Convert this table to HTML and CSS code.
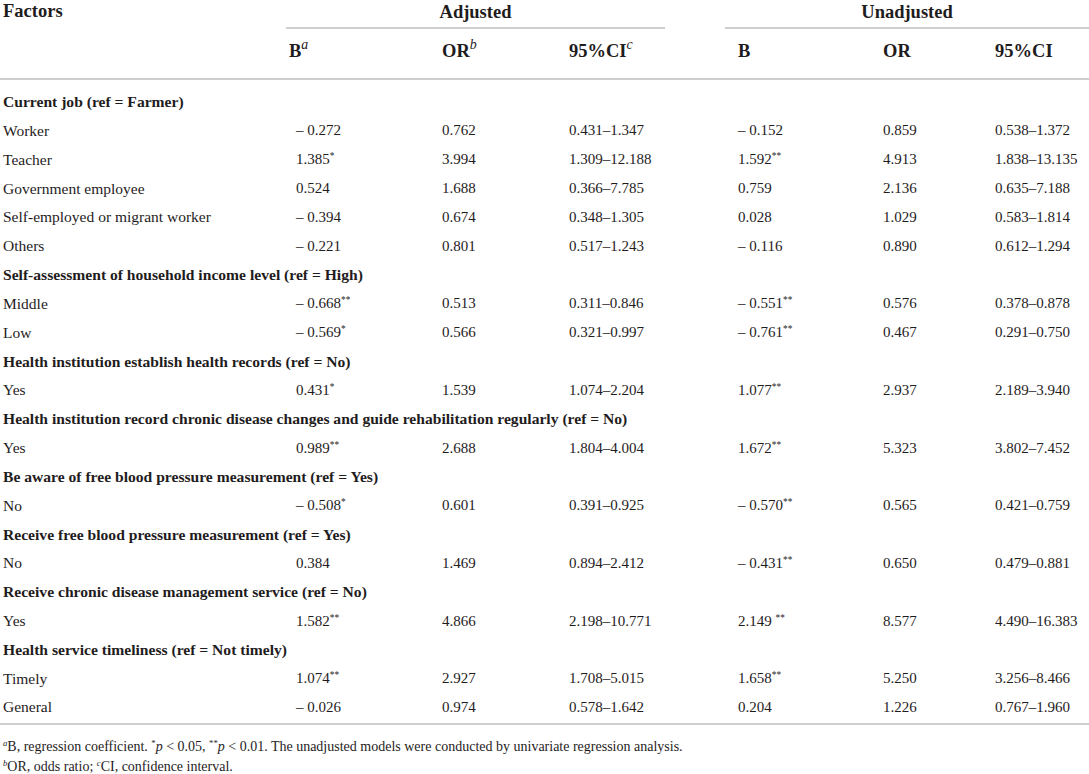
FILE: index.html
```html
<!DOCTYPE html>
<html lang="en">
<head>
    <meta charset="UTF-8">
    <meta name="viewport" content="width=device-width, initial-scale=1.0">
    <title>Factors table</title>
    <link rel="stylesheet" href="styles.css">
</head>
<body>
    <table class="results">
        <colgroup>
            <col class="c-factor">
            <col class="c-b">
            <col class="c-or">
            <col class="c-ci">
            <col class="c-b2">
            <col class="c-or2">
            <col class="c-ci2">
        </colgroup>
        <thead>
            <tr class="group-row">
                <th class="factors" rowspan="2">Factors</th>
                <th colspan="3"><div class="group adjusted">Adjusted</div></th>
                <th colspan="3"><div class="group unadjusted">Unadjusted</div></th>
            </tr>
            <tr class="label-row">
                <th>B<sup><i>a</i></sup></th>
                <th>OR<sup><i>b</i></sup></th>
                <th>95%CI<sup><i>c</i></sup></th>
                <th>B</th>
                <th>OR</th>
                <th>95%CI</th>
            </tr>
        </thead>
        <tbody>
            <tr class="section first"><td colspan="7">Current job (ref = Farmer)</td></tr>
            <tr><td>Worker</td><td>– 0.272</td><td>0.762</td><td>0.431–1.347</td><td>– 0.152</td><td>0.859</td><td>0.538–1.372</td></tr>
            <tr><td>Teacher</td><td>1.385<sup>*</sup></td><td>3.994</td><td>1.309–12.188</td><td>1.592<sup>**</sup></td><td>4.913</td><td>1.838–13.135</td></tr>
            <tr><td>Government employee</td><td>0.524</td><td>1.688</td><td>0.366–7.785</td><td>0.759</td><td>2.136</td><td>0.635–7.188</td></tr>
            <tr><td>Self-employed or migrant worker</td><td>– 0.394</td><td>0.674</td><td>0.348–1.305</td><td>0.028</td><td>1.029</td><td>0.583–1.814</td></tr>
            <tr><td>Others</td><td>– 0.221</td><td>0.801</td><td>0.517–1.243</td><td>– 0.116</td><td>0.890</td><td>0.612–1.294</td></tr>
            <tr class="section"><td colspan="7">Self-assessment of household income level (ref = High)</td></tr>
            <tr><td>Middle</td><td>– 0.668<sup>**</sup></td><td>0.513</td><td>0.311–0.846</td><td>– 0.551<sup>**</sup></td><td>0.576</td><td>0.378–0.878</td></tr>
            <tr><td>Low</td><td>– 0.569<sup>*</sup></td><td>0.566</td><td>0.321–0.997</td><td>– 0.761<sup>**</sup></td><td>0.467</td><td>0.291–0.750</td></tr>
            <tr class="section"><td colspan="7">Health institution establish health records (ref = No)</td></tr>
            <tr><td>Yes</td><td>0.431<sup>*</sup></td><td>1.539</td><td>1.074–2.204</td><td>1.077<sup>**</sup></td><td>2.937</td><td>2.189–3.940</td></tr>
            <tr class="section"><td colspan="7">Health institution record chronic disease changes and guide rehabilitation regularly (ref = No)</td></tr>
            <tr><td>Yes</td><td>0.989<sup>**</sup></td><td>2.688</td><td>1.804–4.004</td><td>1.672<sup>**</sup></td><td>5.323</td><td>3.802–7.452</td></tr>
            <tr class="section"><td colspan="7">Be aware of free blood pressure measurement (ref = Yes)</td></tr>
            <tr><td>No</td><td>– 0.508<sup>*</sup></td><td>0.601</td><td>0.391–0.925</td><td>– 0.570<sup>**</sup></td><td>0.565</td><td>0.421–0.759</td></tr>
            <tr class="section"><td colspan="7">Receive free blood pressure measurement (ref = Yes)</td></tr>
            <tr><td>No</td><td>0.384</td><td>1.469</td><td>0.894–2.412</td><td>– 0.431<sup>**</sup></td><td>0.650</td><td>0.479–0.881</td></tr>
            <tr class="section"><td colspan="7">Receive chronic disease management service (ref = No)</td></tr>
            <tr><td>Yes</td><td>1.582<sup>**</sup></td><td>4.866</td><td>2.198–10.771</td><td>2.149 <sup>**</sup></td><td>8.577</td><td>4.490–16.383</td></tr>
            <tr class="section"><td colspan="7">Health service timeliness (ref = Not timely)</td></tr>
            <tr><td>Timely</td><td>1.074<sup>**</sup></td><td>2.927</td><td>1.708–5.015</td><td>1.658<sup>**</sup></td><td>5.250</td><td>3.256–8.466</td></tr>
            <tr class="last"><td>General</td><td>– 0.026</td><td>0.974</td><td>0.578–1.642</td><td>0.204</td><td>1.226</td><td>0.767–1.960</td></tr>
        </tbody>
    </table>

    <div class="notes">
        <p><sup><i>a</i></sup>B, regression coefficient. <sup>*</sup><i>p</i> &lt; 0.05, <sup>**</sup><i>p</i> &lt; 0.01. The unadjusted models were conducted by univariate regression analysis.</p>
        <p><sup><i>b</i></sup>OR, odds ratio; <sup><i>c</i></sup>CI, confidence interval.</p>
    </div>
</body>
</html>
```

FILE: styles.css
```css
body {
    margin: 0;
    background-color: #ffffff;
    color: #1f1c1d;
    font-family: "Liberation Serif", "Times New Roman", serif;
}

.results {
    width: 1089px;
    border-collapse: collapse;
    table-layout: fixed;
    font-size: 15px;
}

.c-factor { width: 286px; }
.c-b { width: 146px; }
.c-or { width: 127px; }
.c-ci { width: 169px; }
.c-b2 { width: 145px; }
.c-or2 { width: 112px; }
.c-ci2 { width: 104px; }

.results th,
.results td {
    padding: 0 0 0 10px;
    text-align: left;
    white-space: nowrap;
    font-weight: normal;
}

.results th:first-child,
.results td:first-child {
    padding-left: 3px;
}

.results td:first-child {
    font-size: 15.5px;
}

/* header */
.results thead th {
    font-weight: bold;
    font-size: 18.5px;
}

.group-row th {
    height: 30px;
    padding: 0;
    vertical-align: top;
}

.results th.factors {
    padding-left: 3px;
    padding-top: 0;
    vertical-align: top;
    line-height: 22px;
    border-bottom: 2px solid #cfcfcf;
}

.group {
    text-align: center;
    height: 27px;
    line-height: 24px;
    border-bottom: 2px solid #cfcfcf;
}

.adjusted {
    margin-right: 63px;
}

.unadjusted {
    margin-left: -3px;
}

.label-row th {
    height: 43px;
    padding-bottom: 5px;
    vertical-align: middle;
    border-bottom: 2px solid #cfcfcf;
}

/* body rows */
.results tbody tr {
    height: 28.85px;
}

.results tbody tr.first {
    height: 37.4px;
}

.results tbody tr.first td {
    padding-top: 8.6px;
}

.results .section td {
    font-weight: bold;
    font-size: 15.6px;
}

.results tbody tr.last {
    height: 30.4px;
}

.results tbody tr.last td {
    padding-bottom: 1.6px;
    border-bottom: 2px solid #cfcfcf;
}

sup {
    font-size: 0.62em;
    line-height: 0;
    vertical-align: 0.55em;
}

thead sup {
    font-size: 0.75em;
    font-weight: normal;
}

.notes {
    padding: 12px 0 0 3px;
    font-size: 14px;
}

.notes p {
    margin: 0;
    line-height: 20px;
}
```
